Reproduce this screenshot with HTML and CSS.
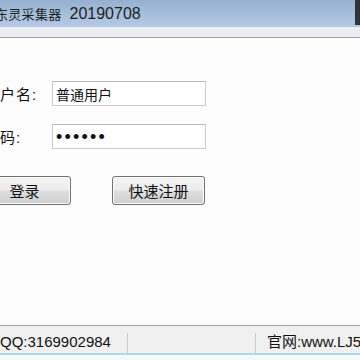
FILE: index.html
```html
<!DOCTYPE html>
<html lang="zh-CN">
<head>
<meta charset="utf-8">
<title>灵采集器</title>
<link rel="stylesheet" href="styles.css">
</head>
<body>
  <div class="titlebar">
    <span class="title-cn">东灵采集器</span><span class="title-num">20190708</span>
    <span class="spacer"></span>
    <span class="frame-edge"></span>
  </div>
  <div class="strip"></div>
  <div class="form">
    <div class="row">
      <span class="label">用户名:</span>
      <div class="field"><span class="value">普通用户</span></div>
    </div>
    <div class="row">
      <span class="label">密码:</span>
      <div class="field"><span class="dots">••••••</span></div>
    </div>
    <div class="buttons">
      <button class="btn" type="button">登录</button>
      <button class="btn" type="button">快速注册</button>
    </div>
  </div>
  <div class="status">
    <div class="cell cell-qq">QQ:3169902984</div>
    <div class="sep"></div>
    <div class="cell cell-mid"></div>
    <div class="sep"></div>
    <div class="cell cell-site">官网:www.LJ5.com</div>
  </div>
  <div class="edge-cyan"></div>
  <div class="edge-white"></div>
</body>
</html>
```
FILE: styles.css
```css
html, body {
  margin: 0;
  padding: 0;
}
body {
  width: 360px;
  height: 360px;
  overflow: hidden;
  display: flex;
  flex-direction: column;
  background: #fdfdfd;
  color: #111;
  font-family: "Liberation Sans", "Noto Sans CJK SC", sans-serif;
}

.titlebar {
  flex: none;
  height: 27px;
  display: flex;
  align-items: center;
  background: linear-gradient(#97b0d0, #b4cbe4);
  color: #1b1f26;
  white-space: nowrap;
  overflow: hidden;
}
.title-cn {
  flex: none;
  font-family: "Noto Sans CJK SC", sans-serif;
  font-size: 13px;
  line-height: 1;
  letter-spacing: 0.3px;
  margin-left: -5px;
}
.title-num {
  flex: none;
  font-family: "Liberation Sans", sans-serif;
  font-size: 16px;
  line-height: 1;
  margin-left: 8px;
}
.spacer {
  flex: 1;
}
.frame-edge {
  flex: none;
  align-self: flex-start;
  width: 5px;
  height: 25px;
  background: #2f3439;
}

.strip {
  flex: none;
  height: 10px;
  background: #eceef2;
  border-bottom: 1px solid #a3a3a3;
}

.form {
  flex: none;
  display: flex;
  flex-direction: column;
  gap: 18px;
  margin-top: 43px;
}
.row {
  display: flex;
  align-items: center;
  height: 25px;
}
.label {
  flex: none;
  width: 68px;
  margin-left: -16px;
  font-size: 15px;
  letter-spacing: 1px;
  white-space: nowrap;
  color: #111;
}
.field {
  flex: none;
  box-sizing: border-box;
  width: 154px;
  height: 25px;
  border: 1px solid #cbcbcb;
  border-top-color: #b9b9b9;
  background: #fff;
  display: flex;
  align-items: center;
  padding-left: 3px;
}
.value {
  font-family: "Noto Sans CJK SC", sans-serif;
  font-size: 14px;
  line-height: 1;
  color: #111;
}
.dots {
  font-family: "Liberation Sans", sans-serif;
  font-size: 18px;
  letter-spacing: 2.2px;
  line-height: 1;
  color: #111;
}

.buttons {
  display: flex;
  gap: 41px;
  margin-top: 9px;
  margin-left: -22px;
}
.btn {
  flex: none;
  box-sizing: border-box;
  width: 93px;
  height: 29px;
  padding: 0;
  border: 1px solid #717171;
  border-radius: 3px;
  background: linear-gradient(#f3f3f3 0%, #ececec 48%, #dedede 52%, #d0d0d0 100%);
  box-shadow: inset 0 0 0 1px #fbfbfb;
  font-family: "Noto Sans CJK SC", sans-serif;
  font-size: 15px;
  line-height: 1;
  color: #111;
}

.status {
  flex: none;
  margin-top: auto;
  height: 27px;
  border-top: 1px solid #a3a3a3;
  background: #f0f0f0;
  display: flex;
  white-space: nowrap;
  overflow: hidden;
}
.cell {
  box-sizing: border-box;
  padding-top: 6px;
  line-height: 20px;
  font-size: 15px;
  color: #111;
}
.cell-qq {
  flex: none;
  width: 127px;
}
.cell-mid {
  flex: none;
  width: 127px;
}
.cell-site {
  flex: 1;
  min-width: 0;
  padding-left: 11px;
}
.sep {
  flex: none;
  width: 1px;
  margin-top: 7px;
  background: #cacaca;
}
.edge-cyan {
  flex: none;
  height: 2px;
  background: #a9dbe7;
}
.edge-white {
  flex: none;
  height: 5px;
  background: #f5fafb;
}
```
